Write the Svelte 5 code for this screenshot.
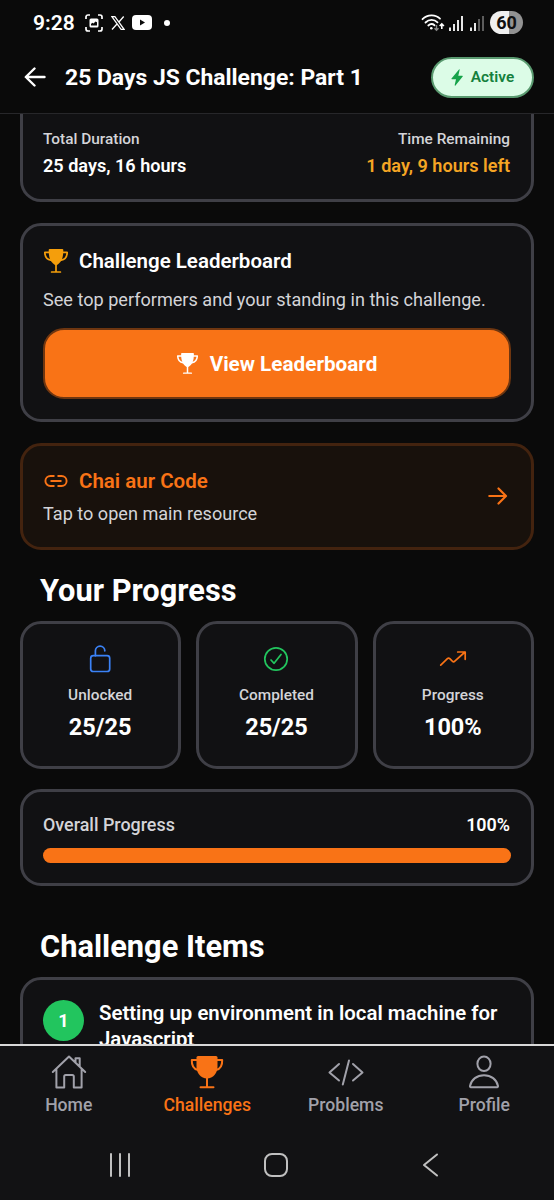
<script>
	const stats = [
		{ icon: 'unlock', label: 'Unlocked', value: '25/25' },
		{ icon: 'check', label: 'Completed', value: '25/25' },
		{ icon: 'trend', label: 'Progress', value: '100%' }
	];

	const items = [{ number: 1, title: 'Setting up environment in local machine for Javascript' }];

	const tabs = ['Home', 'Challenges', 'Problems', 'Profile'];
	let activeTab = 'Challenges';
	let overall = 100;
</script>

{#snippet trophy()}
	<svg class="trophy" viewBox="0 0 24 24">
		<path d="M4.7.9C4.7.4 5.1 0 5.6 0h12.8c.5 0 .9.4.9.9 0 7-1 12.4-7.3 15.6C5.7 13.3 4.7 7.9 4.7.9z" fill="currentColor" />
		<path d="M5 3.300H.8C.9 7.700 3 10.600 6.900 11.200M19 3.300h4.200c-.1 4.400-2.200 7.300-6.100 7.900M12 15v7.800M7.600 23h8.800" fill="none" stroke="currentColor" stroke-width="1.700" stroke-linecap="round" stroke-linejoin="round" />
	</svg>
{/snippet}

<div class="screen">
	<div class="status">
		<span class="clock">9:28</span>
		<svg class="capture" viewBox="0 0 18 18" width="18" height="18">
			<path d="M1 5V3a2 2 0 0 1 2-2h2M13 1h2a2 2 0 0 1 2 2v2M17 13v2a2 2 0 0 1-2 2h-2M5 17H3a2 2 0 0 1-2-2v-2" fill="none" stroke="#fff" stroke-width="1.700" />
			<path fill-rule="evenodd" d="M6 4.500h6A1.500 1.500 0 0 1 13.500 6v6a1.500 1.500 0 0 1-1.500 1.500H6A1.500 1.500 0 0 1 4.500 12V6A1.500 1.500 0 0 1 6 4.500zM6 11.500h6V8.200L10.500 7.500 8.500 9.600 7.300 8.800 6 10z" fill="#fff" />
		</svg>
		<svg class="x" viewBox="0 0 14 14" width="14" height="14">
			<path d="M.9.7h3l9.200 12.600h-3zM12.700.5L7.700 6.200M6 8L1 13.500" fill="none" stroke="#fff" stroke-width="1.300" />
		</svg>
		<svg class="tube" viewBox="0 0 20 15" width="20" height="15">
			<rect width="20" height="15" rx="4" fill="#fff" />
			<path d="M8 4.500v6l5-3z" fill="#0a0a0a" />
		</svg>
		<span class="dot"></span>
		<svg class="wifi" viewBox="0 0 24 18" width="24" height="18">
			<g fill="none" stroke="#fff" stroke-width="1.800" stroke-linecap="round">
				<path d="M1.500 5.200C6.500.2 14.500.2 19 4.700M4.500 8.500c3.500-3.400 8.700-3.400 12-.2M7.300 11.500c1.900-1.700 4.400-1.700 6.200-.2" />
			</g>
			<circle cx="10.300" cy="14.200" r="1.300" fill="#fff" />
			<path d="M15.500 11v5M13.500 14.200l2 2 2-2" fill="none" stroke="#888" stroke-width="1.400" />
			<path d="M20.800 15v-5M18.700 12l2.100-2.200L22.900 12" fill="none" stroke="#fff" stroke-width="1.600" />
		</svg>
		<svg class="signal" viewBox="0 0 14 16" width="14" height="16">
			<path d="M1 12.500V16M5 9v7M9 5v11M13 1v15" stroke="#fff" stroke-width="1.800" />
		</svg>
		<svg class="signal second" viewBox="0 0 14 16" width="14" height="16">
			<path d="M1 12.500V16M5 8v8" stroke="#fff" stroke-width="1.800" />
			<path d="M9 4v12M13 1v15" stroke="#666" stroke-width="1.800" />
		</svg>
		<span class="battery">60</span>
	</div>

	<header>
		<svg viewBox="0 0 22 20" width="22" height="20">
			<path d="M10.500 1.500L1.800 10l8.700 8.500M2 10h18.500" fill="none" stroke="#fff" stroke-width="2.400" stroke-linecap="round" stroke-linejoin="round" />
		</svg>
		<h1>25 Days JS Challenge: Part 1</h1>
		<div class="badge">
			<svg viewBox="0 0 12 17" width="12" height="17">
				<path d="M8 .4L.5 9.400c-.3.4 0 .8.4.8H5L3.700 16.100c-.1.600.4.800.8.4L11.700 7.600c.3-.4 0-.9-.4-.9H7.300L8.600 1C8.800.3 8.400-.1 8 .4z" fill="#16a34a" />
			</svg>
			Active
		</div>
	</header>

	<main>
		<section class="card duration">
			<div>
				<div class="label">Total Duration</div>
				<div class="time">25 days, 16 hours</div>
			</div>
			<div class="right">
				<div class="label">Time Remaining</div>
				<div class="time amber">1 day, 9 hours left</div>
			</div>
		</section>

		<section class="card leaderboard">
			<h3><span class="amber">{@render trophy()}</span>Challenge Leaderboard</h3>
			<p>See top performers and your standing in this challenge.</p>
			<button>{@render trophy()}<span>View Leaderboard</span></button>
		</section>

		<section class="card resource">
			<div>
				<h3>
					<svg viewBox="0 0 24 24" width="24" height="24">
						<path d="M9.800 17H6.400a5 5 0 0 1 0-10h3.400M14.200 7h3.400a5 5 0 0 1 0 10h-3.400M7.200 12h9.600" fill="none" stroke="currentColor" stroke-width="1.900" stroke-linecap="round" />
					</svg>
					Chai aur Code
				</h3>
				<p>Tap to open main resource</p>
			</div>
			<svg viewBox="0 0 20 18" width="20" height="18">
				<path d="M10.500 1.500L18 9l-7.500 7.500M1.300 9H17.800" fill="none" stroke="currentColor" stroke-width="2.200" stroke-linecap="round" stroke-linejoin="round" />
			</svg>
		</section>

		<h2>Your Progress</h2>
		<div class="stats">
			{#each stats as stat}
				<div class="card stat">
					<svg viewBox="0 0 30 30" width="30" height="30" fill="none" stroke-linecap="round" stroke-linejoin="round">
						{#if stat.icon === 'unlock'}
							<rect x="5.700" y="11.700" width="19" height="15.800" rx="2.600" stroke="#3b82f6" stroke-width="1.700" />
							<path d="M10.400 11.700V6.800a4.700 4.700 0 0 1 9.400 0" stroke="#3b82f6" stroke-width="1.700" />
						{:else if stat.icon === 'check'}
							<circle cx="15" cy="15" r="11.200" stroke="#22c55e" stroke-width="1.700" />
							<path d="M20 10.500l-6.900 8.800L10 16" stroke="#22c55e" stroke-width="1.700" />
						{:else}
							<path d="M2.700 21.200l6.700-6.500q1.200-1.200 2.400 0l2.500 2.500q1.300 1.200 2.500 0L27 8M19.700 8h7.500v7.300" stroke="#f97316" stroke-width="1.700" />
						{/if}
					</svg>
					<div class="label">{stat.label}</div>
					<div class="value">{stat.value}</div>
				</div>
			{/each}
		</div>

		<section class="card overall">
			<div class="row">
				<span>Overall Progress</span>
				<b>{overall}%</b>
			</div>
			<div class="track"><div class="fill" style="width: {overall}%"></div></div>
		</section>

		<h2 class="items-title">Challenge Items</h2>
		{#each items as item}
			<section class="card item">
				<span class="number">{item.number}</span>
				<div class="item-title">{item.title}</div>
			</section>
		{/each}
	</main>

	<nav>
		{#each tabs as tab}
			<div class="tab" class:active={tab === activeTab}>
				<svg viewBox="0 0 36 34" width="36" height="34" fill="none" stroke="currentColor" stroke-width="2" stroke-linecap="round" stroke-linejoin="round">
					{#if tab === 'Home'}
						<path d="M1.800 17L18 1.500l16.200 15.500M5.400 14v18.500h7.800V21.500q0-1.500 1.500-1.500h6.600q1.500 0 1.500 1.500v11h7.800V14M24.500 7.500V3.200h4.200V11.500" />
					{:else if tab === 'Challenges'}
						<path d="M7.500 2.500q0-1.500 1.500-1.500h18q1.500 0 1.500 1.500V12c0 6-4.500 11.500-10.500 11.500S7.500 18 7.500 12z" fill="currentColor" stroke="none" />
						<path d="M8 5H2.800C2.600 10 4.500 14 9 15M28 5h5.200C33.400 10 31.500 14 27 15M18 23v9M11.500 32.200h13" />
					{:else if tab === 'Problems'}
						<path d="M11 9L1.500 17.500l9.500 8M25 9l9.500 8.500-9.500 8M21 5.500L14.800 29.500" />
					{:else}
						<ellipse cx="18" cy="8.800" rx="6.600" ry="7.300" />
						<path d="M4.600 32.200C3.900 32.200 4 31.300 4 31c1.300-6.500 7-10.800 14-10.800S30.700 24.500 32 31c0 .3.100 1.200-.6 1.200z" />
					{/if}
				</svg>
				{tab}
			</div>
		{/each}
	</nav>

	<div class="system">
		<svg viewBox="0 0 24 24" width="24" height="24"><path d="M2 1v22M11 1v22M20 1v22" /></svg>
		<svg viewBox="0 0 24 24" width="24" height="24"><rect x="1" y="1" width="22" height="22" rx="7" /></svg>
		<svg viewBox="0 0 24 24" width="24" height="24"><path d="M18 1.500L5 12l13 10.500" /></svg>
	</div>
</div>

<style>
	:global(body) {
		background: #0a0a0a;
	}
	* {
		box-sizing: border-box;
		margin: 0;
	}
	svg {
		flex: none;
		display: block;
	}
	.screen {
		width: 554px;
		height: 1200px;
		display: flex;
		flex-direction: column;
		background: #0a0a0a;
		color: #fff;
		font-family: Roboto, sans-serif;
		overflow: hidden;
	}

	.status {
		height: 45px;
		flex: none;
		display: flex;
		align-items: center;
		padding: 0 31px 0 33px;
	}
	.clock {
		font-size: 21px;
		font-weight: 600;
		width: 52px;
	}
	.x {
		margin-left: 8px;
	}
	.tube {
		margin-left: 7px;
	}
	.dot {
		width: 6px;
		height: 6px;
		margin-left: 12px;
		border-radius: 50%;
		background: #fff;
	}
	.wifi {
		margin-left: auto;
	}
	.signal {
		margin-left: 4px;
	}
	.second {
		margin-left: 7px;
	}
	.battery {
		width: 33px;
		height: 23px;
		margin-left: 6px;
		border-radius: 12px;
		background: linear-gradient(90deg, #f0f0f0 58%, #929292 58%);
		color: #111;
		font-size: 18px;
		font-weight: 700;
		line-height: 24px;
		text-align: center;
	}

	header {
		height: 69px;
		flex: none;
		display: flex;
		align-items: center;
		padding: 0 20px 4px 24px;
		border-bottom: 1px solid #27272a;
	}
	h1 {
		margin-left: 19px;
		padding-top: 1px;
		font-size: 22.9px;
		font-weight: 700;
		line-height: 30px;
	}
	.badge {
		width: 103px;
		height: 41px;
		margin-left: auto;
		display: flex;
		align-items: center;
		justify-content: center;
		gap: 8px;
		border: 2px solid #5a9a70;
		border-radius: 21px;
		background: #dcfce7;
		color: #15803d;
		font-size: 15.4px;
		font-weight: 600;
	}

	main {
		height: 930px;
		flex: none;
		padding: 0 20px;
		overflow: hidden;
	}
	.card {
		border: 3px solid #3f3f46;
		border-radius: 21px;
		background: #111113;
		padding: 0 20px;
	}
	.label {
		color: #d4d4d8;
		font-size: 15.4px;
		font-weight: 500;
		line-height: 20px;
	}
	.amber {
		color: #f59e0b;
	}
	.duration {
		height: 88px;
		display: flex;
		justify-content: space-between;
		padding: 15px 21px 0 20px;
		border-top: 0;
		border-radius: 0 0 21px 21px;
	}
	.time {
		margin-top: 6px;
		font-size: 18.1px;
		font-weight: 600;
		line-height: 22px;
	}
	.time.amber {
		color: #f5a524;
	}
	.right {
		text-align: right;
	}
	.leaderboard {
		height: 199px;
		margin-top: 21px;
		padding-top: 20px;
	}
	h3 {
		display: flex;
		align-items: center;
		gap: 11px;
		padding-left: 1px;
		font-size: 20.5px;
		font-weight: 600;
		line-height: 30px;
	}
	.trophy {
		width: 24px;
		height: 24px;
	}
	p {
		color: #d4d4d8;
		font-size: 18.1px;
		line-height: 24px;
	}
	.leaderboard p {
		margin-top: 12px;
	}
	button {
		width: 468px;
		height: 71px;
		margin-top: 16px;
		display: flex;
		align-items: center;
		justify-content: center;
		gap: 12px;
		border: 2px solid #6f3610;
		border-radius: 21px;
		background: #f97316;
		color: #fff;
		font: 700 20.7px Roboto, sans-serif;
	}
	button .trophy {
		width: 21px;
		height: 21px;
	}
	.resource {
		height: 107px;
		margin-top: 21px;
		display: flex;
		align-items: center;
		justify-content: space-between;
		padding: 0 23px 1px 20px;
		border-color: #43230f;
		background: #18110c;
		color: #f97316;
	}
	.resource p {
		margin-top: 6px;
	}
	h2 {
		margin: 21px 0 0 20px;
		font-size: 30.8px;
		font-weight: 700;
		line-height: 40px;
	}
	.stats {
		display: grid;
		grid-template-columns: repeat(3, 1fr);
		gap: 15px;
		margin-top: 10px;
	}
	.stat {
		height: 148px;
		display: flex;
		flex-direction: column;
		align-items: center;
		padding: 20px 1px 0 0;
	}
	.stat .label {
		margin-top: 11px;
	}
	.value {
		margin-top: 7px;
		font-size: 23.5px;
		font-weight: 700;
		line-height: 30px;
	}
	.overall {
		height: 97px;
		margin-top: 20px;
		padding-top: 20px;
	}
	.row {
		display: flex;
		justify-content: space-between;
		padding-right: 1px;
		color: #d4d4d8;
		font-size: 17.9px;
		font-weight: 500;
		line-height: 26px;
	}
	.row b {
		color: #fff;
		font-weight: 600;
	}
	.track {
		height: 15px;
		margin-top: 10px;
		border-radius: 8px;
		background: #27272a;
	}
	.fill {
		height: 100%;
		border-radius: 8px;
		background: #f97316;
	}
	.items-title {
		margin-top: 41px;
	}
	.item {
		height: 120px;
		margin-top: 10px;
		display: flex;
		gap: 15px;
		padding-top: 20px;
		font-size: 20.4px;
		font-weight: 600;
		line-height: 25.5px;
	}
	.item-title {
		padding-top: 1px;
	}
	.number {
		width: 41px;
		height: 41px;
		flex: none;
		border-radius: 50%;
		background: #22c55e;
		font-size: 18px;
		font-weight: 700;
		line-height: 41px;
		text-align: center;
	}

	nav {
		height: 86px;
		flex: none;
		display: grid;
		grid-template-columns: repeat(4, 1fr);
		border-top: 2px solid #d8d8d8;
		background: #121214;
	}
	.tab {
		display: flex;
		flex-direction: column;
		align-items: center;
		padding: 9px 1px 0 0;
		color: #a1a1aa;
		font-size: 17.6px;
		font-weight: 500;
		line-height: 33px;
	}
	.active {
		color: #f97316;
	}
	.system {
		flex: 1;
		display: flex;
		justify-content: center;
		gap: 131px;
		padding: 23px 2px 0 0;
		background: #121214;
	}
	.system svg {
		fill: none;
		stroke: #c0c0c0;
		stroke-width: 2;
		stroke-linecap: round;
		stroke-linejoin: round;
	}
</style>
